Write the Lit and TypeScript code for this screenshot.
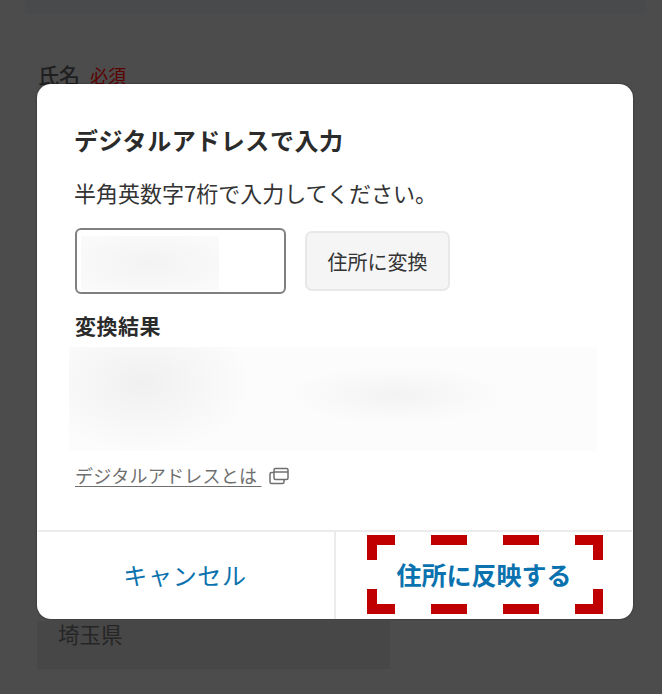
import { LitElement, html, css } from "lit";
import { customElement } from "lit/decorators.js";

@customElement("app-root")
export class AppRoot extends LitElement {
  static styles = css`
    :host {
      display: block;
      position: relative;
      width: 662px;
      height: 694px;
      overflow: hidden;
      background: #4c4c4c;
      font-family: "Noto Sans CJK JP", "Noto Sans", sans-serif;
      color: #262626;
    }
    .page { display: flex; flex-direction: column; padding: 0 17px 0 25px; }
    .top-bar { height: 14px; background: #484a4b; }
    .field-label {
      margin: 45px 0 0 13px;
      display: flex; align-items: baseline; gap: 10px;
      font-size: 21px; line-height: 30px; font-weight: 500; color: #1f1f1f;
    }
    .req { font-size: 18px; color: #5c0000; font-weight: 400; }
    .pref {
      margin: 531px 0 0 12px;
      width: 353px; height: 48px; background: #474747; box-sizing: border-box;
      padding: 0 21px 23px; display: flex; align-items: center;
      font-size: 21.5px; line-height: 30px; color: #262626;
    }
    .modal {
      position: absolute; left: 37px; top: 84px; width: 596px; height: 535px;
      background: #fff; border-radius: 14px; overflow: hidden;
      box-shadow: 0 0 2px rgba(0,0,0,.5);
      display: flex; flex-direction: column;
    }
    .body { flex: 1; padding: 38px 38px 0 37px; display: flex; flex-direction: column; min-height: 0; }
    h2 { margin: 0; font-size: 24px; line-height: 36px; font-weight: 700; color: #2b2b2b; letter-spacing: .55px; }
    .hint { margin: 18px 0 0; font-size: 22px; line-height: 32px; font-weight: 400; color: #333; }
    .row { display: flex; align-items: center; gap: 19px; margin: 20px 0 0 1px; }
    .input {
      box-sizing: border-box; width: 211px; height: 66px; padding: 6px 4px 2px;
      border: 2px solid #808080; border-radius: 6px; background: #fff;
    }
    .input-blur { width: 138px; height: 100%; background: radial-gradient(ellipse at 50% 50%, #f3f3f3, #fafafa 90%); }
    .convert {
      box-sizing: border-box; width: 145px; height: 60px; border: 2px solid #e8e8e8; border-radius: 7px;
      background: #f5f5f5; font: inherit; font-size: 20px; color: #333; padding: 0;
    }
    h3 { margin: 16px 0 0 1px; font-size: 21px; line-height: 30px; font-weight: 700; color: #2b2b2b; letter-spacing: .5px; }
    .blur {
      margin: 7px 0 0 -5px; width: 528px; height: 104px;
      background:
        radial-gradient(ellipse 110px 70px at 14% 35%, #f0f0f0, rgba(250,250,250,0)),
        radial-gradient(ellipse 110px 30px at 62% 46%, #f3f3f3, rgba(250,250,250,0)),
        #fcfcfc;
    }
    .link {
      margin: 11px 0 0 1px; display: flex; align-items: center; gap: 8px;
      font-size: 18px; line-height: 27px; color: #6f6f6f;
    }
    .link span { text-decoration: underline; text-underline-offset: 3px; white-space: pre; letter-spacing: .25px; }
    .link svg { display: block; }
    .actions { height: 87px; border-top: 2px solid #ebebeb; display: grid; grid-template-columns: 298px 1fr; margin: 0 1px; }
    .actions button {
      border: 0; background: none; font: inherit; color: #0a72ae; padding: 0 0 3px;
    }
    .actions .left { font-size: 24px; border-right: 2px solid #ebebeb; letter-spacing: .7px; padding-right: 2px; }
    .actions .main { font-size: 25px; font-weight: 700; }
    .marks { position: absolute; left: 367px; top: 535px; }
  `;

  render() {
    return html`
      <div class="page">
        <div class="top-bar"></div>
        <div class="field-label">氏名<span class="req">必須</span></div>
        <div class="pref">埼玉県</div>
      </div>
      <div class="modal">
        <div class="body">
          <h2>デジタルアドレスで入力</h2>
          <p class="hint">半角英数字7桁で入力してください。</p>
          <div class="row">
            <div class="input"><div class="input-blur"></div></div>
            <button class="convert">住所に変換</button>
          </div>
          <h3>変換結果</h3>
          <div class="blur"></div>
          <div class="link">
            <span>デジタルアドレスとは </span>
            <svg width="20" height="18" viewBox="0 0 20 18" fill="none" stroke="#6f6f6f" stroke-width="1.5">
              <rect x="5" y="1.5" width="14" height="11" rx="1.5"></rect>
              <path d="M5 5h14"></path>
              <path d="M5 5.5H2.5a1.5 1.5 0 0 0-1.5 1.5v8a1.5 1.5 0 0 0 1.5 1.5h11a1.5 1.5 0 0 0 1.5-1.5v-2.5"></path>
            </svg>
          </div>
        </div>
        <div class="actions">
          <button class="left">キャンセル</button>
          <button class="main">住所に反映する</button>
        </div>
      </div>
      <svg class="marks" width="236" height="79" viewBox="0 0 236 79" fill="none" stroke="#c00000" stroke-width="10">
        <path d="M5 25V5H28"></path>
        <path d="M208 5H231V25"></path>
        <path d="M5 54V74H28"></path>
        <path d="M208 74H231V54"></path>
        <path d="M64 5H100M136 5H172M64 74H100M136 74H172"></path>
      </svg>
    `;
  }
}
